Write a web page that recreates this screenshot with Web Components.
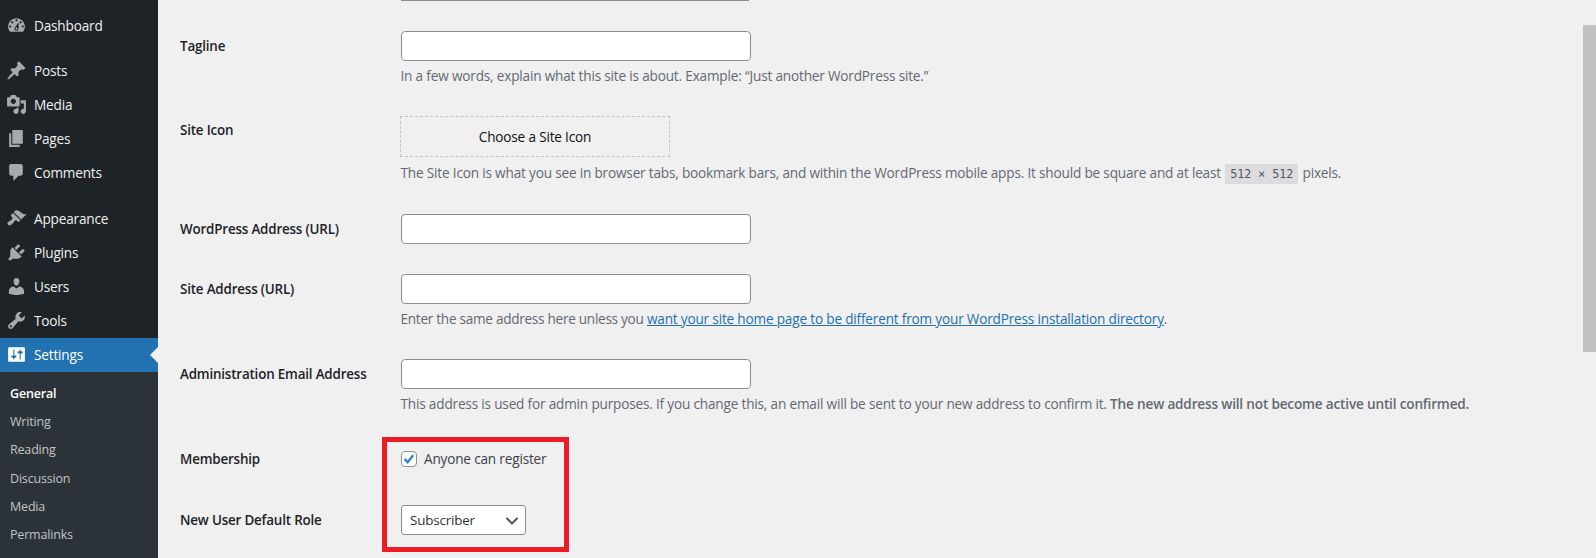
<!DOCTYPE html>
<html lang="en"><head><meta charset="utf-8"><title>General Settings</title>
<style>
html,body{margin:0;padding:0;height:558px;overflow:hidden;background:#f0f0f1;}
body{font:13.6px/20px "Open Sans","Noto Sans",sans-serif;color:#1d2327;letter-spacing:-.18px;display:flex;position:relative}
</style></head><body>
<admin-shell>
  <admin-menu slot="menu"></admin-menu>
  <settings-form></settings-form>
</admin-shell>
<red-box></red-box>
<fake-scroll></fake-scroll>
<script>
const P={
dashboard:"M3.76 16h12.48c1.1-1.37 1.76-3.11 1.76-5 0-4.42-3.58-8-8-8s-8 3.58-8 8c0 1.89.66 3.63 1.76 5zM10 4c.55 0 1 .45 1 1s-.45 1-1 1-1-.45-1-1 .45-1 1-1zM6 6c.55 0 1 .45 1 1s-.45 1-1 1-1-.45-1-1 .45-1 1-1zm8 0c.55 0 1 .45 1 1s-.45 1-1 1-1-.45-1-1 .45-1 1-1zm-5.37 5.55L12 7v6c0 1.1-.9 2-2 2s-2-.9-2-2c0-.57.24-1.08.63-1.45zM4 10c.55 0 1 .45 1 1s-.45 1-1 1-1-.45-1-1 .45-1 1-1zm12 0c.55 0 1 .45 1 1s-.45 1-1 1-1-.45-1-1 .45-1 1-1zm-5 3c0-.55-.45-1-1-1s-1 .45-1 1 .45 1 1 1 1-.45 1-1z",
post:"M10.44 3.02l1.82-1.82 6.36 6.35-1.83 1.82c-1.05-.68-2.48-.57-3.41.36l-.75.75c-.92.93-1.04 2.35-.35 3.41l-1.83 1.82-2.41-2.41-2.8 2.79c-.42.42-3.38 2.71-3.8 2.29s1.86-3.39 2.28-3.81l2.79-2.79L4.1 9.36l1.83-1.82c1.05.69 2.48.57 3.4-.36l.75-.75c.93-.92 1.05-2.35.36-3.41z",
media:"M13 11V4c0-.55-.45-1-1-1h-1.67L9 1H5L3.67 3H2c-.55 0-1 .45-1 1v7c0 .55.45 1 1 1h10c.55 0 1-.45 1-1zM7 4.5c1.38 0 2.5 1.12 2.5 2.5S8.38 9.5 7 9.5 4.5 8.38 4.5 7 5.62 4.5 7 4.5zM14 6h5v10.5c0 1.38-1.12 2.5-2.5 2.5S14 17.88 14 16.5s1.12-2.5 2.5-2.5c.17 0 .34.02.5.05V9h-3V6zm-4 8.05V13h2v3.5c0 1.38-1.12 2.5-2.5 2.5S7 17.88 7 16.5 8.12 14 9.5 14c.17 0 .34.02.5.05z",
page:"M6 15V2h10v13H6zm-1 1h8v2H3V5h2v11z",
comments:"M5 2h9c1.1 0 2 .9 2 2v7c0 1.1-.9 2-2 2h-2l-5 5v-5H5c-1.1 0-2-.9-2-2V4c0-1.1.9-2 2-2z",
appearance:"M14.48 11.06L7.41 3.99l1.5-1.5c.5-.56 2.3-.47 3.51.32 1.21.8 1.43 1.28 2.91 2.1 1.18.64 2.45 1.26 4.45.85zm-.71.71L6.7 4.7 4.93 6.47c-.39.39-.39 1.02 0 1.41l1.06 1.06c.39.39.39 1.03 0 1.42-.6.6-1.43 1.11-2.21 1.69-.35.26-.7.53-1.01.84C1.43 13.23.91 14.9 2 16s2.77.43 4.11-.92c.31-.31.58-.66.84-1.01.58-.78 1.09-1.61 1.69-2.21.39-.39 1.03-.39 1.42 0l1.06 1.06c.39.39 1.02.39 1.41 0z",
plugins:"M13.11 4.36L9.87 7.6 8 5.73l3.24-3.24c.35-.34 1.05-.2 1.56.32.52.51.66 1.21.31 1.55zm-8 1.77l.91-1.12 9.01 9.01-1.19.84c-.71.71-2.63 1.16-3.82 1.16H6.14L4.9 17.26c-.59.59-1.54.59-2.12 0-.59-.58-.59-1.53 0-2.12l1.24-1.24v-3.88c0-1.13.4-3.19 1.09-3.89zm7.26 3.97l3.24-3.24c.34-.35 1.04-.21 1.55.31.52.51.66 1.21.31 1.55l-3.24 3.25z",
users:"M10 9.25c-2.27 0-2.73-3.44-2.73-3.44C7 4.02 7.82 2 9.97 2c2.16 0 2.98 2.02 2.71 3.81 0 0-.41 3.44-2.68 3.44zm0 2.57L12.72 10c2.39 0 4.52 2.33 4.52 4.53v2.49s-3.65 1.13-7.24 1.13c-3.65 0-7.24-1.13-7.24-1.13v-2.49c0-2.25 1.94-4.48 4.47-4.48z",
tools:"M16.68 9.77c-1.34 1.34-3.3 1.67-4.95.99l-5.41 6.52c-.99.99-2.59.99-3.58 0s-.99-2.59 0-3.57l6.52-5.42c-.68-1.65-.35-3.61.99-4.95 1.28-1.28 3.12-1.62 4.72-1.06l-2.89 2.89 2.82 2.82 2.86-2.87c.53 1.58.18 3.39-1.08 4.65zM3.81 16.21c.4.39 1.04.39 1.43 0 .4-.4.4-1.04 0-1.43-.39-.4-1.03-.4-1.43 0-.39.39-.39 1.03 0 1.43z",
settings:"M18 16V4c0-.55-.45-1-1-1H3c-.55 0-1 .45-1 1v12c0 .55.45 1 1 1h13.99c.55 0 1.01-.45 1.01-1zM8 11h1c.55 0 1 .45 1 1s-.45 1-1 1H8v1.5c0 .28-.22.5-.5.5s-.5-.22-.5-.5V13H6c-.55 0-1-.45-1-1s.45-1 1-1h1V5.5c0-.28.22-.5.5-.5s.5.22.5.5V11zm5-2h-1c-.55 0-1-.45-1-1s.45-1 1-1h1V5.5c0-.28.22-.5.5-.5s.5.22.5.5V7h1c.55 0 1 .45 1 1s-.45 1-1 1h-1v5.5c0 .28-.22.5-.5.5s-.5-.22-.5-.5V9z"};
class Base extends HTMLElement{
  constructor(){super();this.attachShadow({mode:"open"});}
}
customElements.define("admin-shell",class extends Base{connectedCallback(){this.shadowRoot.innerHTML=`<style>:host{display:flex;width:100%;height:558px;overflow:hidden}</style><slot name="menu"></slot><slot></slot>`;}});
customElements.define("menu-item",class extends Base{connectedCallback(){
 const cur=this.hasAttribute("current");
 this.shadowRoot.innerHTML=`<style>
 :host{display:flex;align-items:center;height:34.2px;color:#f0f0f1;position:relative;${cur?"background:#2271b1;color:#fff;":""}}
 svg{width:21px;height:21px;margin-left:6px;margin-right:7px;fill:${cur?"#fff":"#a7aaad"};flex:none}
 .t{padding-top:1px}
 ${cur?":host::after{content:'';position:absolute;right:0;top:50%;margin-top:-8px;border:8px solid transparent;border-right-color:#f0f0f1;border-left:0}":""}
 </style><svg viewBox="0 0 20 20"><path d="${P[this.getAttribute("icon")]}"/></svg><span class="t"><slot></slot></span>`;}});
customElements.define("sub-item",class extends Base{connectedCallback(){
 const cur=this.hasAttribute("current");
 this.shadowRoot.innerHTML=`<style>:host{display:flex;align-items:center;height:28.2px;padding-left:10px;font-size:12.5px;color:${cur?"#fff":"#c3c4c7"};${cur?"font-weight:600;":""}}</style><slot></slot>`;}});
customElements.define("admin-menu",class extends Base{connectedCallback(){
 const m=(i,t,x="")=>`<menu-item icon="${i}" ${x}>${t}</menu-item>`;
 const s=(t,x="")=>`<sub-item ${x}>${t}</sub-item>`;
 this.shadowRoot.innerHTML=`<style>:host{display:block;width:158px;flex:none;background:#1d2327;height:558px;overflow:hidden}
 .top{margin-top:8px}.gap{height:11px}.sub{background:#2c3338;padding-top:8px;padding-bottom:20px}</style>
 <div class="top">${m("dashboard","Dashboard")}</div><div class="gap"></div>
 ${m("post","Posts")}${m("media","Media")}${m("page","Pages")}${m("comments","Comments")}<div class="gap"></div>
 ${m("appearance","Appearance")}${m("plugins","Plugins")}${m("users","Users")}${m("tools","Tools")}${m("settings","Settings","current")}
 <div class="sub">${s("General","current")}${s("Writing")}${s("Reading")}${s("Discussion")}${s("Media")}${s("Permalinks")}${s("Privacy")}</div>`;}});
customElements.define("form-row",class extends Base{connectedCallback(){
 this.shadowRoot.innerHTML=`<style>:host{display:grid;grid-template-columns:221px 1fr;align-items:start}
 .l{font-weight:600;font-size:13.4px;line-height:20px;color:#1d2327;padding-top:var(--lt,5px)}
 </style><div class="l">${this.getAttribute("label")}</div><div class="c"><slot></slot></div>`;}});
customElements.define("text-field",class extends Base{connectedCallback(){
 this.shadowRoot.innerHTML=`<style>:host{display:block;width:350px;height:30px;box-sizing:border-box;background:#fff;border:1px solid #8c8f94;border-radius:4px}</style>`;}});
customElements.define("field-desc",class extends Base{connectedCallback(){
 this.shadowRoot.innerHTML=`<style>:host{display:block;color:#646970;font-size:13.6px;line-height:20px;margin-top:5px;white-space:nowrap;margin-left:-.5px}</style><slot></slot>`;}});
customElements.define("icon-button",class extends Base{connectedCallback(){
 this.shadowRoot.innerHTML=`<style>:host{display:flex;align-items:center;justify-content:center;width:270px;height:41px;box-sizing:border-box;border:1px dashed #c3c4c7;margin-left:-1px;margin-bottom:6px;color:#111;font-size:13.6px}</style><slot></slot>`;}});
customElements.define("check-label",class extends Base{connectedCallback(){
 this.shadowRoot.innerHTML=`<style>:host{display:flex;align-items:center;height:20px;color:#3c434a;font-size:13.6px}
 .b{width:16px;height:16px;box-sizing:border-box;border:1px solid #8c8f94;border-radius:4px;background:#fff;margin-right:7px;flex:none;display:flex}
 svg{width:14px;height:14px;fill:none;stroke:#3582c4;stroke-width:2.4}</style>
 <span class="b"><svg viewBox="0 0 14 14"><path d="M2.6 7.2l3 3 5.6-7"/></svg></span><slot></slot>`;}});
customElements.define("select-box",class extends Base{connectedCallback(){
 this.shadowRoot.innerHTML=`<style>:host{display:flex;align-items:center;justify-content:space-between;width:125px;height:30px;box-sizing:border-box;border:1px solid #8c8f94;border-radius:3px;background:#fff;padding:0 8px;color:#2c3338;font-size:13.4px}
 svg{width:16px;height:16px;fill:none;stroke:#50575e;stroke-width:2;margin-right:-3px}</style><slot></slot><svg viewBox="0 0 16 16"><path d="M2.5 6l5.500 5.500L13.500 6"/></svg>`;}});
customElements.define("settings-form",class extends Base{connectedCallback(){
 this.shadowRoot.innerHTML=`<style>:host{display:block;flex:1;padding-left:22px;min-width:0}
 .peek{width:348px;margin-left:221px;height:1px;background:#8c8f94}
 a{color:#2271b1;text-decoration:underline}
 code{font:11.6px "DejaVu Sans Mono","Liberation Mono",monospace;letter-spacing:0;background:#dcdcde;color:#50575e;padding:3px 5px;margin:0 1px}
 b{font-weight:600}
 .tight{letter-spacing:-.28px}
 .tag{letter-spacing:-.18px}
 </style>
 <div class="peek"></div>
 <form-row style="margin-top:30px" label="Tagline"><text-field></text-field><field-desc><span class="tag">In a few words, explain what this site is about. Example: “Just another WordPress site.”</span></field-desc></form-row>
 <form-row style="margin-top:30px;--lt:4px" label="Site Icon"><icon-button>Choose a Site Icon</icon-button><field-desc>The Site Icon is what you see in browser tabs, bookmark bars, and within the WordPress mobile apps. It should be square and at least <code>512 × 512</code> pixels.</field-desc></form-row>
 <form-row style="margin-top:31px" label="WordPress Address (URL)"><text-field></text-field></form-row>
 <form-row style="margin-top:30px" label="Site Address (URL)"><text-field></text-field><field-desc><span class="tight">Enter the same address here unless you</span> <a href="#">want your site home page to be different from your WordPress installation directory</a>.</field-desc></form-row>
 <form-row style="margin-top:30px" label="Administration Email Address"><text-field></text-field><field-desc>This address is used for admin purposes. If you change this, an email will be sent to your new address to confirm it. <b>The new address will not become active until confirmed.</b></field-desc></form-row>
 <form-row style="margin-top:35px;--lt:0px" label="Membership"><check-label>Anyone can register</check-label></form-row>
 <form-row style="margin-top:36px" label="New User Default Role"><select-box>Subscriber</select-box></form-row>`;}});
customElements.define("red-box",class extends Base{connectedCallback(){
 this.shadowRoot.innerHTML=`<style>:host{position:absolute;left:382px;top:437px;width:187px;height:115px;box-sizing:border-box;border:5px solid #ed1c24}</style>`;}});
customElements.define("fake-scroll",class extends Base{connectedCallback(){
 this.shadowRoot.innerHTML=`<style>:host{position:absolute;left:1583px;top:25px;width:13px;height:327px;background:#c1c1c1}</style>`;}});
</script>
</body></html>
